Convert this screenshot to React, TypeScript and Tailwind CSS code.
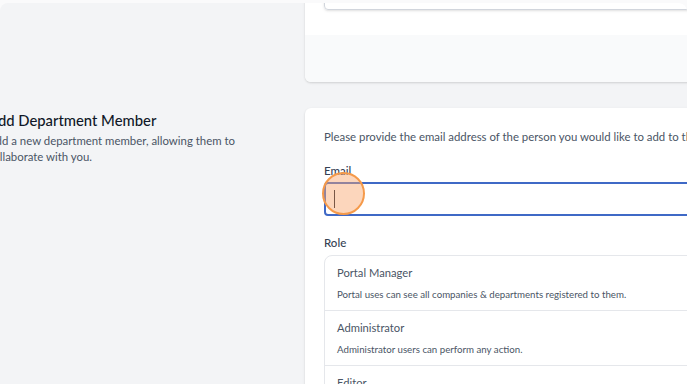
export default function App() {
  const roles = [
    { name: 'Portal Manager', desc: 'Portal uses can see all companies & departments registered to them.' },
    { name: 'Administrator', desc: 'Administrator users can perform any action.' },
    { name: 'Editor', desc: 'Editor users have the ability to read, create, and update.' },
  ];

  return (
    <div className="h-[384px] w-[687px] overflow-hidden bg-[#fafafb] pt-[3px] font-['Lato',sans-serif]">
      <div className="h-full overflow-hidden rounded-t-[8px] bg-[#f3f4f6]">
        {/* previous section, scrolled mostly out of view */}
        <div className="-mt-[40px] flex">
          <div className="w-[293px] shrink-0 -ml-3" />
          <div className="ml-6 w-[760px] shrink-0 rounded-b-md bg-white shadow-[0_1px_3px_rgba(0,0,0,0.1),0_1px_2px_rgba(0,0,0,0.06)]">
            <div className="px-[19px] pt-[13px] pb-[25px]">
              <div className="flex h-[34px] items-center rounded-[4px] border border-gray-300 px-[12px] text-[11.5px] text-gray-900 shadow-sm">
                Company
              </div>
            </div>
            <div className="h-[47px] rounded-b-md bg-[#f9fafb]" />
          </div>
        </div>

        {/* add member section */}
        <div className="mt-[26px] flex items-start">
          <div className="w-[293px] shrink-0 -ml-3 pt-[1.5px]">
            <h3 className="text-[14.8px] leading-[21px] font-medium text-gray-900">Add Department Member</h3>
            <p className="mt-[2px] text-[11.4px] leading-[16px] text-gray-600">
              Add a new department member, allowing them to collaborate with you.
            </p>
          </div>
          <div className="ml-6 w-[760px] shrink-0 rounded-t-md bg-white px-[19px] pt-5 pb-6 shadow-[0_1px_3px_rgba(0,0,0,0.1),0_1px_2px_rgba(0,0,0,0.06)]">
            <p className="text-[11.4px] leading-[17px] text-gray-600">
              Please provide the email address of the person you would like to add to this department.
            </p>

            <div className="mt-[16.5px]">
              <label className="block text-[11.5px] leading-[17px] font-medium text-gray-700">Email</label>
              <div className="relative mt-[3px]">
                <div className="flex h-[34px] items-center rounded-[4px] border-2 border-[#3f69c6] px-[8px]">
                  <span className="h-[18px] w-px bg-gray-900" />
                </div>
                <span className="absolute -left-[2px] -top-[10px] h-[43px] w-[43px] rounded-full border-2 border-[#f59a4a] bg-[#f8a46a]/45" />
              </div>
            </div>

            <div className="mt-[18.5px]">
              <label className="block text-[11.5px] leading-[17px] font-medium text-gray-700">Role</label>
              <div className="mt-[3.5px] overflow-hidden rounded-lg border border-gray-200">
                {roles.map((r, i) => (
                  <div key={r.name} className={`px-[12px] pt-[8px] pb-[9px] ${i > 0 ? 'border-t border-gray-200' : ''}`}>
                    <div className="text-[11.2px] leading-[17px] text-gray-600">{r.name}</div>
                    <div className="mt-[7px] text-[9.7px] leading-[13px] text-gray-600">{r.desc}</div>
                  </div>
                ))}
              </div>
            </div>
          </div>
        </div>
      </div>
    </div>
  );
}
